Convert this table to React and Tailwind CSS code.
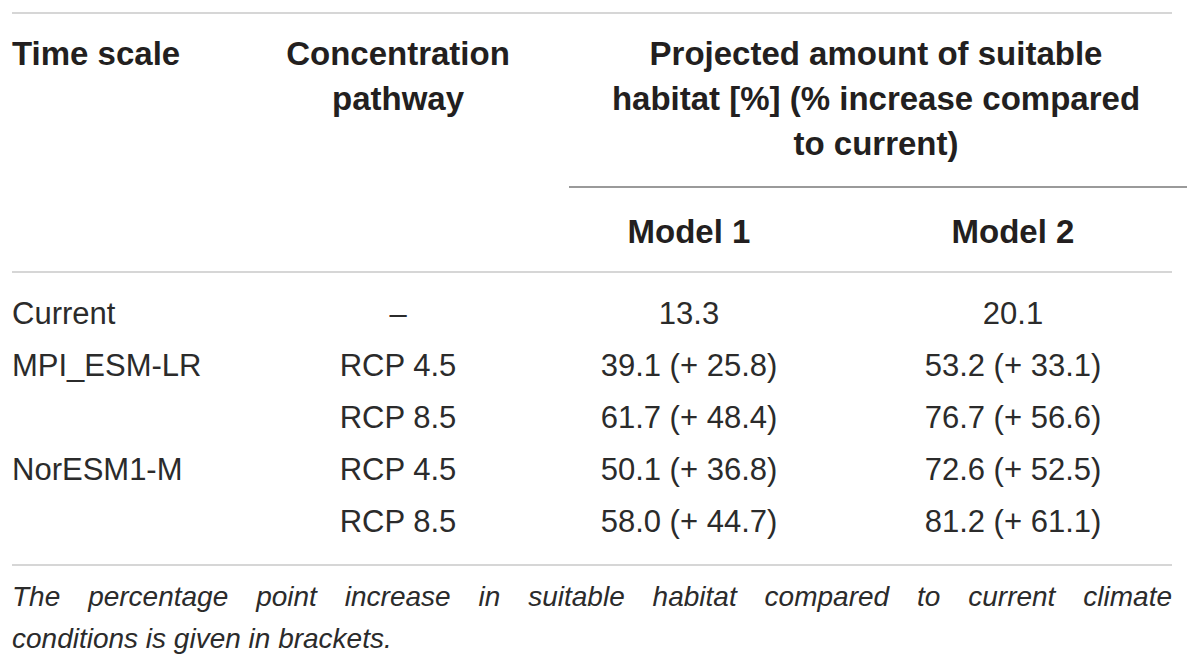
import React from 'react'

const rows = [
  { scale: 'Current', path: '–', m1: '13.3', m2: '20.1' },
  { scale: 'MPI_ESM-LR', path: 'RCP 4.5', m1: '39.1 (+ 25.8)', m2: '53.2 (+ 33.1)' },
  { scale: '', path: 'RCP 8.5', m1: '61.7 (+ 48.4)', m2: '76.7 (+ 56.6)' },
  { scale: 'NorESM1-M', path: 'RCP 4.5', m1: '50.1 (+ 36.8)', m2: '72.6 (+ 52.5)' },
  { scale: '', path: 'RCP 8.5', m1: '58.0 (+ 44.7)', m2: '81.2 (+ 61.1)' }
]

const cols = 'grid grid-cols-[232px_308px_274px_374px]'

export default function App() {
  return (
    <div className="w-[1200px] h-[672px] overflow-hidden bg-white pl-3 pt-3 text-[#231f20] font-['Liberation_Sans',Arial,sans-serif]">
      <div className="h-[2px] w-[1160px] bg-[#d6d6d6]" />

      <div className={`${cols} font-bold text-[33px] leading-[45px]`}>
        <div className="row-span-2 pt-[17px]">Time scale</div>
        <div className="row-span-2 pt-[17px] text-center">
          Concentration<br />pathway
        </div>
        <div className="col-span-2 pt-[17px] text-center">
          <div>
            Projected amount of suitable<br />
            habitat [%] (% increase compared<br />
            to current)
          </div>
          <div className="mt-[20px] ml-[17px] mr-[13px] h-[2px] bg-[#9a9a9a]" />
        </div>
        <div className="pt-[21px] pb-[17px] text-center">Model 1</div>
        <div className="pt-[21px] pb-[17px] text-center">Model 2</div>
      </div>

      <div className="h-[2px] w-[1160px] bg-[#d6d6d6]" />

      <div className="pt-[15px] pb-[16px] text-[31px] leading-[52px] text-[#2b2b2b]">
        {rows.map((row, idx) => (
          <div key={idx} className={cols}>
            <div>{row.scale}</div>
            <div className="text-center">{row.path}</div>
            <div className="text-center">{row.m1}</div>
            <div className="text-center">{row.m2}</div>
          </div>
        ))}
      </div>

      <div className="h-[2px] w-[1160px] bg-[#d6d6d6]" />

      <div className="mt-[10px] w-[1160px] italic text-[28px] leading-[42px] text-[#2b2b2b]">
        <p className="text-justify [text-align-last:justify]">
          The percentage point increase in suitable habitat compared to current climate
        </p>
        <p>conditions is given in brackets.</p>
      </div>
    </div>
  )
}
